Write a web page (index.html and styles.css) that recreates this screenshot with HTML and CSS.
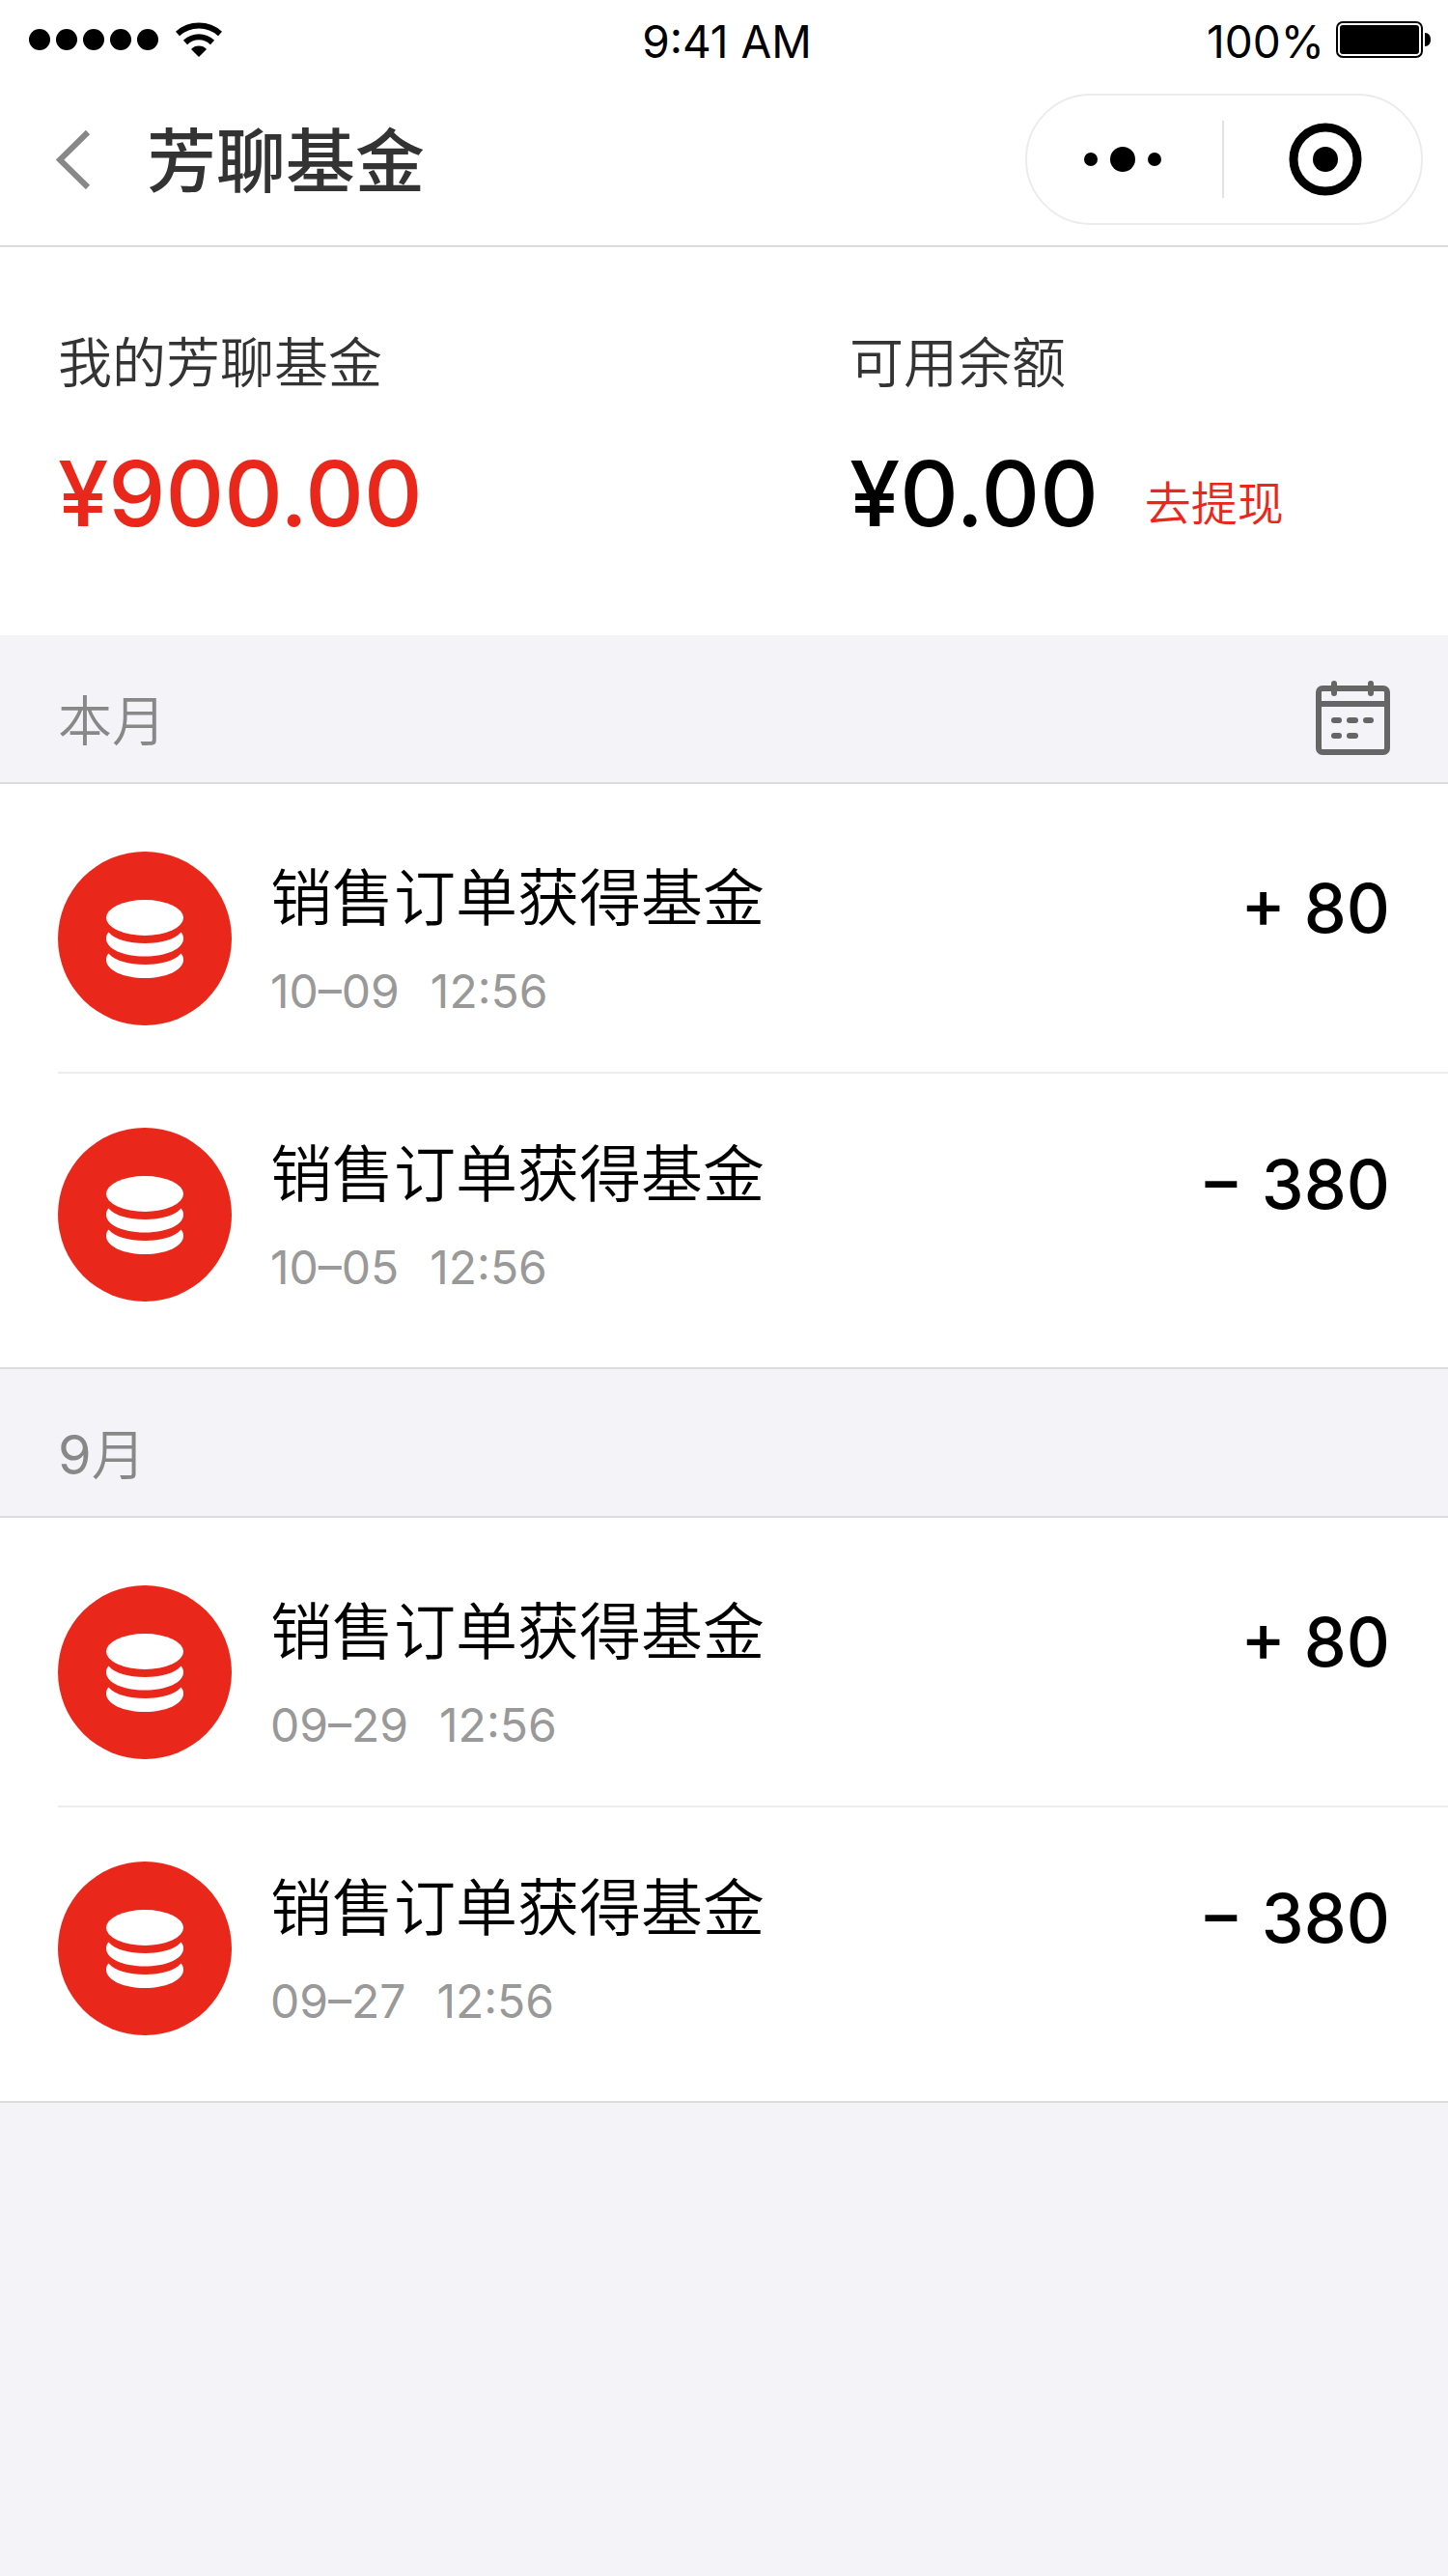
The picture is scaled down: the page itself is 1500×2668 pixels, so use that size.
FILE: index.html
```html
<!DOCTYPE html>
<html lang="zh-CN">
<head>
<meta charset="utf-8">
<meta name="viewport" content="width=device-width, initial-scale=1">
<title>芳聊基金</title>
<link rel="stylesheet" href="styles.css">
</head>
<body>
<svg class="sprite" aria-hidden="true">
  <symbol id="coins" viewBox="0 0 180 180">
    <ellipse cx="90" cy="68.500" rx="40" ry="18.500"/>
    <path d="M52.500 83.500C59 91 73 95 90 95S121 91 127.500 83.500C129 85 130 87 130 90C130 101 112 108.500 90 108.500S50 101 50 90C50 87 51 85 52.500 83.500Z"/>
    <path d="M52.500 105.500C59 113 73 117 90 117S121 113 127.500 105.500C129 107 130 109 130 112C130 123 112 131 90 131S50 123 50 112C50 109 51 107 52.500 105.500Z"/>
  </symbol>
</svg>

<header class="top">
  <div class="status">
    <div class="status-left">
      <svg width="134" height="22" viewBox="0 0 134 22" aria-hidden="true"><circle cx="11" cy="11" r="11"/><circle cx="39" cy="11" r="11"/><circle cx="67" cy="11" r="11"/><circle cx="95" cy="11" r="11"/><circle cx="123" cy="11" r="11"/></svg>
      <svg width="48" height="36" viewBox="0 0 48 36" aria-hidden="true"><path d="M24 36L16 28A11 11 0 0 1 32 28Z"/><path d="M10 21A20 20 0 0 1 38 21M2 12A33 33 0 0 1 46 12" fill="none" stroke="#000" stroke-width="6"/></svg>
    </div>
    <time class="clock">9:41 AM</time>
    <div class="status-right">
      <span>100%</span>
      <svg width="98" height="38" viewBox="0 0 98 38" aria-hidden="true"><rect x="1" y="1" width="88" height="36" rx="6" fill="none" stroke="#000" stroke-width="2"/><rect x="4" y="4" width="82" height="30" rx="3"/><path d="M92 12C96 12 98 15 98 19S96 26 92 26Z"/></svg>
    </div>
  </div>
  <div class="nav">
    <button class="back" type="button" aria-label="返回"><svg width="36" height="62" viewBox="0 0 36 62"><path d="M33 3L4 31.500L33 60" fill="none" stroke="#888" stroke-width="6"/></svg></button>
    <h1>芳聊基金</h1>
    <div class="capsule">
      <button class="more" type="button" aria-label="更多"><svg width="82" height="26" viewBox="0 0 82 26"><circle cx="8" cy="13" r="7"/><circle cx="41" cy="13" r="13"/><circle cx="74" cy="13" r="7"/></svg></button>
      <button class="close" type="button" aria-label="关闭"><svg width="76" height="76" viewBox="0 0 76 76"><circle cx="38" cy="38" r="33" fill="none" stroke="#000" stroke-width="9"/><circle cx="38" cy="38" r="13"/></svg></button>
    </div>
  </div>
</header>

<main>
  <section class="summary">
    <div>
      <h2>我的芳聊基金</h2>
      <p class="money red">¥900.00</p>
    </div>
    <div>
      <h2>可用余额</h2>
      <p class="money">¥0.00<a href="#">去提现</a></p>
    </div>
  </section>

  <section class="month">
    <div class="month-head">
      <h2>本月</h2>
      <button type="button" aria-label="选择日期"><svg width="78" height="78" viewBox="0 0 78 78" fill="none" stroke="#666" stroke-width="6"><rect x="4" y="9" width="71" height="66" rx="4"/><path d="M4 25H75"/><path d="M20 4V14M58 4V14M20 42H25M36 42H42M53 42H58M20 58H25M36 58H42" stroke-linecap="round"/></svg></button>
    </div>
    <ul>
      <li>
        <svg class="coin" aria-hidden="true"><use href="#coins"/></svg>
        <div class="entry">
          <div><h3>销售订单获得基金</h3><p><time>10–09</time><time>12:56</time></p></div>
          <strong>+ 80</strong>
        </div>
      </li>
      <li>
        <svg class="coin" aria-hidden="true"><use href="#coins"/></svg>
        <div class="entry">
          <div><h3>销售订单获得基金</h3><p><time>10–05</time><time>12:56</time></p></div>
          <strong>− 380</strong>
        </div>
      </li>
    </ul>
  </section>

  <section class="month">
    <div class="month-head">
      <h2><span class="num">9</span>月</h2>
    </div>
    <ul>
      <li>
        <svg class="coin" aria-hidden="true"><use href="#coins"/></svg>
        <div class="entry">
          <div><h3>销售订单获得基金</h3><p><time>09–29</time><time>12:56</time></p></div>
          <strong>+ 80</strong>
        </div>
      </li>
      <li>
        <svg class="coin" aria-hidden="true"><use href="#coins"/></svg>
        <div class="entry">
          <div><h3>销售订单获得基金</h3><p><time>09–27</time><time>12:56</time></p></div>
          <strong>− 380</strong>
        </div>
      </li>
    </ul>
  </section>
</main>
</body>
</html>
```

FILE: styles.css
```css
* {
  box-sizing: border-box;
  margin: 0;
  padding: 0;
}

body {
  min-height: 100vh;
  background: #f4f3f8;
  color: #000;
  font-family: Inter, "Noto Sans CJK SC", sans-serif;
}

button {
  display: flex;
  align-items: center;
  justify-content: center;
  border: 0;
  background: none;
  cursor: pointer;
}

svg {
  display: block;
  flex: none;
}

.sprite {
  position: absolute;
  width: 0;
  height: 0;
}

/* Status bar and navigation */
.top {
  background: #fff;
  border-bottom: 2px solid #dcdcdc;
}

.status {
  display: grid;
  grid-template-columns: 1fr auto 1fr;
  align-items: center;
  height: 82px;
  padding: 0 18px 0 24px;
  font-size: 46px;
}

.status-left,
.status-right {
  display: flex;
  align-items: center;
}

.status-left {
  gap: 18px;
  padding-left: 6px;
}

.status-right {
  justify-content: flex-end;
  gap: 12px;
}

.clock,
.status-right span {
  padding-top: 4px;
  line-height: 78px;
}

.nav {
  display: flex;
  align-items: center;
  height: 172px;
  padding: 0 26px 6px 58px;
}

.nav h1 {
  flex: 1;
  padding: 4px 0 0 58px;
  color: #333;
  font-size: 72px;
  font-weight: 500;
  line-height: 104px;
}

.capsule {
  display: flex;
  width: 412px;
  height: 136px;
  border: 2px solid #ececec;
  border-radius: 68px;
}

.capsule button {
  position: relative;
  flex: 1;
}

.more {
  padding-right: 4px;
}

.close {
  padding-left: 8px;
}

.close::before {
  content: "";
  position: absolute;
  left: 0;
  top: 26px;
  bottom: 26px;
  width: 2px;
  background: #e2e2e2;
}

/* Balances */
.summary {
  display: grid;
  grid-template-columns: 820fr 560fr;
  padding: 80px 60px 88px;
  background: #fff;
}

.summary h2 {
  color: #333;
  font-size: 56px;
  font-weight: 350;
  line-height: 80px;
}

.money {
  display: flex;
  align-items: flex-end;
  gap: 48px;
  padding-top: 36px;
  font-size: 94px;
  font-weight: 500;
  line-height: 118px;
}

.red,
.money a {
  color: #e9281b;
}

.money a {
  font-size: 48px;
  font-weight: 350;
  line-height: 96px;
  text-decoration: none;
}

/* Monthly records */
.month-head {
  display: flex;
  align-items: center;
  justify-content: space-between;
  height: 152px;
  padding: 18px 60px 0;
}

.month-head h2 {
  padding-top: 8px;
  color: #888;
  font-size: 56px;
  font-weight: 350;
  line-height: 80px;
}

.num {
  font-weight: 400;
}

.month ul {
  list-style: none;
  padding: 12px 0 20px;
  background: #fff;
  border-top: 2px solid #dcdcdc;
  border-bottom: 2px solid #dcdcdc;
}

.month li {
  display: flex;
  gap: 40px;
  height: 286px;
  padding: 58px 0 0 60px;
}

.month li + li {
  background: linear-gradient(#ececec, #ececec) 60px 0 / 100% 2px no-repeat;
}

.coin {
  width: 180px;
  height: 180px;
  border-radius: 50%;
  background: #e9281b;
  fill: #fff;
}

.entry {
  flex: 1;
  display: flex;
  justify-content: space-between;
  padding-right: 60px;
}

.entry h3 {
  font-size: 64px;
  font-weight: 350;
  line-height: 96px;
}

.entry p {
  display: flex;
  gap: 32px;
  color: #999;
  font-size: 48px;
  line-height: 98px;
}

.entry strong {
  font-size: 70px;
  font-weight: 500;
  line-height: 118px;
}
```
